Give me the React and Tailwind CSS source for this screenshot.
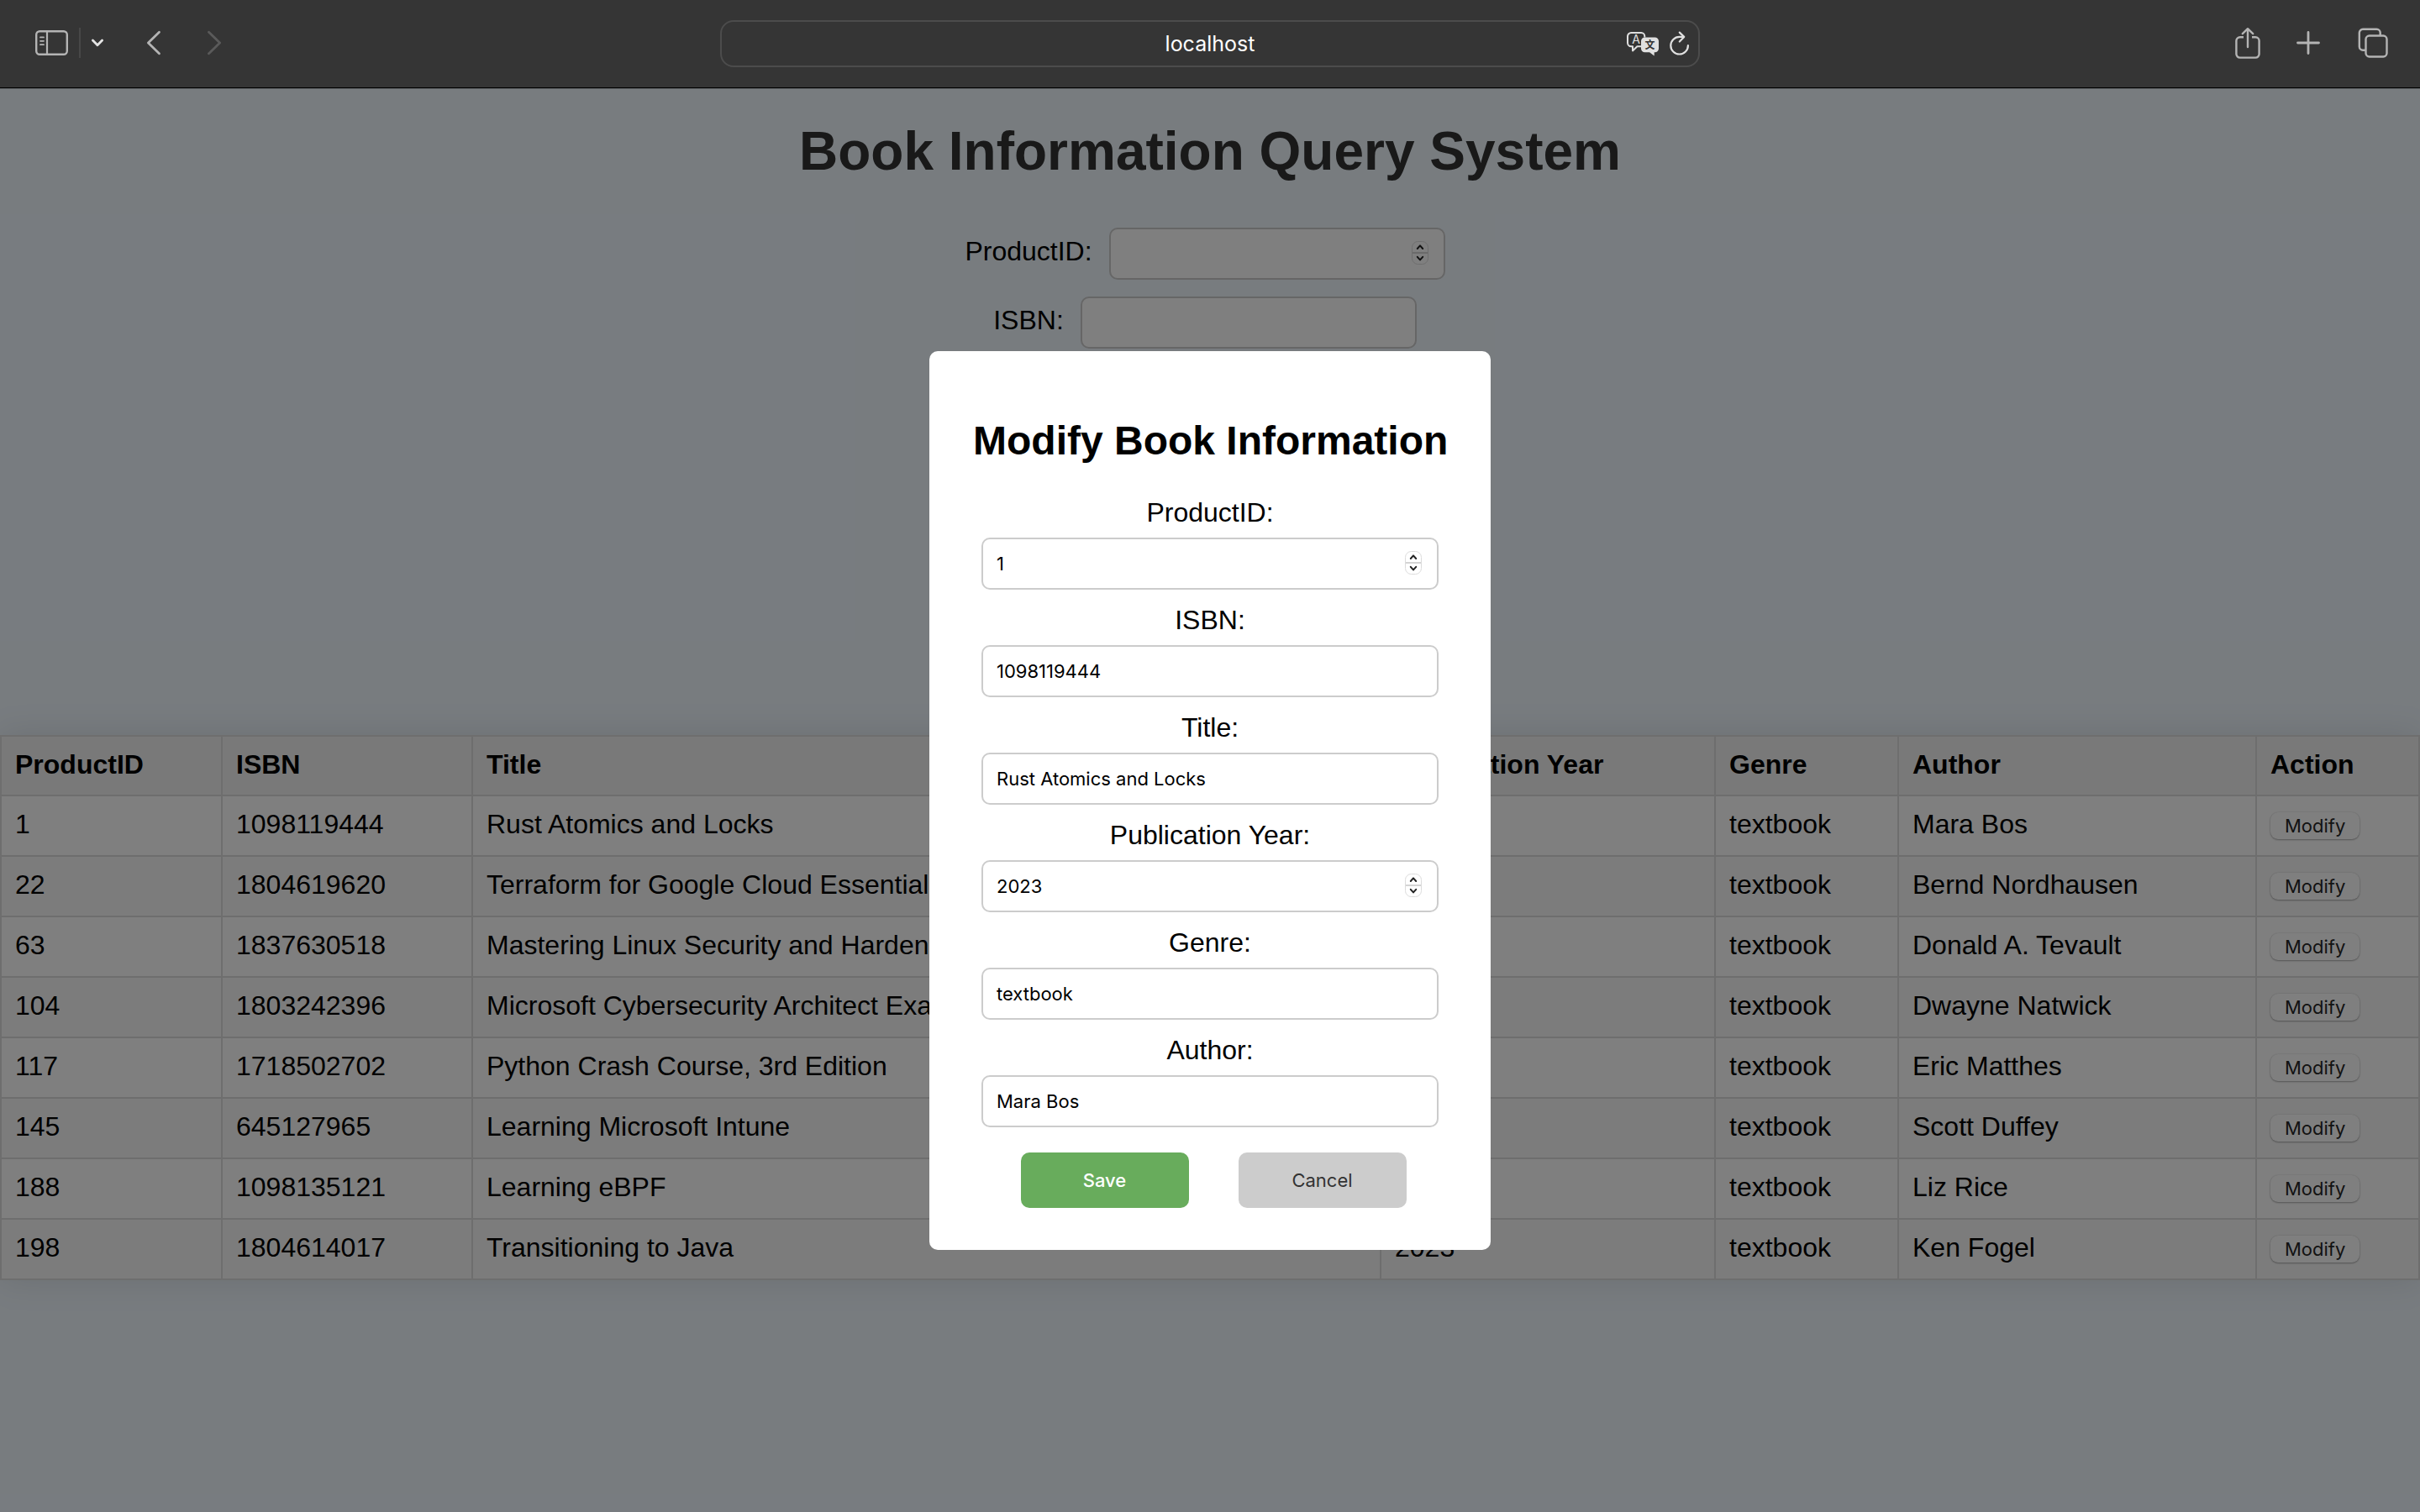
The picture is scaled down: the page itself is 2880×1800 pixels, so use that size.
import React from "react";

const books = [
  ["1", "1098119444", "Rust Atomics and Locks", "2023", "textbook", "Mara Bos"],
  ["22", "1804619620", "Terraform for Google Cloud Essentials", "2023", "textbook", "Bernd Nordhausen"],
  ["63", "1837630518", "Mastering Linux Security and Hardening", "2023", "textbook", "Donald A. Tevault"],
  ["104", "1803242396", "Microsoft Cybersecurity Architect Exam Ref", "2023", "textbook", "Dwayne Natwick"],
  ["117", "1718502702", "Python Crash Course, 3rd Edition", "2023", "textbook", "Eric Matthes"],
  ["145", "645127965", "Learning Microsoft Intune", "2023", "textbook", "Scott Duffey"],
  ["188", "1098135121", "Learning eBPF", "2023", "textbook", "Liz Rice"],
  ["198", "1804614017", "Transitioning to Java", "2023", "textbook", "Ken Fogel"],
];

const columns = [
  ["ProductID", "w-[263px]"],
  ["ISBN", "w-[298px]"],
  ["Title", ""],
  ["Publication Year", "w-[398px]"],
  ["Genre", "w-[218px]"],
  ["Author", "w-[426px]"],
  ["Action", "w-[194px]"],
];

const fields = [
  { id: "edit-product", label: "ProductID:", value: "1", number: true },
  { id: "edit-isbn", label: "ISBN:", value: "1098119444" },
  { id: "edit-title", label: "Title:", value: "Rust Atomics and Locks" },
  { id: "edit-year", label: "Publication Year:", value: "2023", number: true },
  { id: "edit-genre", label: "Genre:", value: "textbook" },
  { id: "edit-author", label: "Author:", value: "Mara Bos" },
];

function Stepper() {
  return (
    <svg
      aria-hidden="true"
      className="pointer-events-none absolute top-4 right-[18px] h-7 w-6"
      viewBox="0 0 24 28"
      fill="none"
    >
      <rect x="2.5" y="0.5" width="19" height="27" rx="7" fill="#fff" stroke="#dcdcdc" />
      <path d="M3 14h18" stroke="#d4d4d4" strokeWidth="2" />
      <path d="M8.800 9 12 5.400l3.200 3.600M8.800 18.800l3.200 3.600 3.200-3.600" stroke="#222" strokeWidth="2" strokeLinecap="round" strokeLinejoin="round" />
    </svg>
  );
}

function TextBox({ id, number, value, className }) {
  return (
    <div className={"relative " + className}>
      <input
        id={id}
        type={number ? "number" : "text"}
        defaultValue={value}
        className="block h-[62px] w-full appearance-none rounded-[10px] border-2 border-[#ccc] bg-white px-4 font-['Inter',sans-serif] text-[22px] text-black [appearance:textfield] [&::-webkit-inner-spin-button]:appearance-none"
      />
      {number && <Stepper />}
    </div>
  );
}

function Toolbar() {
  return (
    <header className="border-b border-[#5c5f61] bg-[#353535]">
      <div className="grid h-[105px] grid-cols-[1fr_40.5%_1fr] items-center border-b border-black text-[#b4b4b4]">
        <div className="flex items-center pb-0.5 pl-[41px]">
          <button type="button" aria-label="Show sidebar">
            <svg className="h-8 w-[41px]" viewBox="0 0 41 32" fill="none" stroke="currentColor">
              <rect x="2.2" y="2.2" width="36.6" height="27.6" rx="4" strokeWidth="2.4" />
              <path d="M15 2v28" strokeWidth="2.2" />
              <path d="M7 9.4h4M7 13.8h4M7 18.2h4" strokeWidth="1.8" strokeLinecap="round" />
            </svg>
          </button>
          <span className="ml-3 h-9 w-0.5 bg-[#484848]" />
          <button type="button" aria-label="Tab groups" className="ml-3">
            <svg className="h-4 w-4" viewBox="0 0 16 16" fill="none" stroke="#e4e4e4" strokeWidth="2.8" strokeLinecap="round" strokeLinejoin="round">
              <path d="m2.4 5 5.6 5.8L13.6 5" />
            </svg>
          </button>
          <button type="button" aria-label="Back" className="ml-[49px]">
            <svg className="h-8 w-5" viewBox="0 0 20 32" fill="none" stroke="currentColor" strokeWidth="2.8" strokeLinecap="round" strokeLinejoin="round">
              <path d="M16.5 3.2 3.4 16l13.1 12.8" />
            </svg>
          </button>
          <button type="button" aria-label="Forward" className="ml-[52px] text-[#5a5a5a]">
            <svg className="h-8 w-5" viewBox="0 0 20 32" fill="none" stroke="currentColor" strokeWidth="2.8" strokeLinecap="round" strokeLinejoin="round">
              <path d="M3.5 3.2 16.6 16 3.5 28.8" />
            </svg>
          </button>
        </div>

        <div className="relative">
          <input
            aria-label="Address"
            defaultValue="localhost"
            className="block h-14 w-full rounded-2xl border-2 border-[#4c4c4c] bg-transparent px-24 text-center font-['Inter',sans-serif] text-[25px] text-white"
          />
          <div className="absolute inset-y-0 right-3 flex items-center gap-3 text-[#e0e0e0]">
            <button type="button" aria-label="Translate">
              <svg className="h-8 w-10" viewBox="0 0 40 32" fill="none">
                <path d="M18 19.3h-4.6L8 24.4v-5.1H6.2A4.2 4.2 0 0 1 2 15.100V7.200A4.200 4.200 0 0 1 6.200 3h12A4.200 4.200 0 0 1 22.300 7.200V8.500" stroke="currentColor" strokeWidth="2" strokeLinejoin="round" />
                <text x="12.200" y="16" fontSize="14" textAnchor="middle" fill="currentColor" fontFamily="Inter, sans-serif">A</text>
                <path d="M22.500 8.500h12A4.500 4.500 0 0 1 39 13v8.800a4.500 4.500 0 0 1-4.500 4.500h-.8v4.200l-5.600-4.200h-5.600a4.500 4.500 0 0 1-4.500-4.500V13a4.500 4.500 0 0 1 4.500-4.500Z" fill="currentColor" />
                <text x="28.500" y="22" fontSize="12" fontWeight="700" textAnchor="middle" fill="#353535" fontFamily="'Noto Sans CJK SC', sans-serif">文</text>
              </svg>
            </button>
            <button type="button" aria-label="Reload">
              <svg className="h-8 w-6" viewBox="0 0 24 32" fill="none" stroke="currentColor" strokeWidth="2.200" strokeLinecap="round" strokeLinejoin="round">
                <path d="M21.900 18.200A10.300 10.300 0 1 1 11.600 7.900h5" />
                <path d="m11.800 2.600 5.400 5.300-5.400 5.600" />
              </svg>
            </button>
          </div>
        </div>

        <div className="flex items-center justify-end pr-[38px] pb-[3px]">
          <button type="button" aria-label="Share">
            <svg className="h-10 w-8" viewBox="0 0 32 40" fill="none" stroke="currentColor" strokeWidth="2.400" strokeLinecap="round" strokeLinejoin="round">
              <path d="M11 13.200H6.800a4.400 4.400 0 0 0-4.400 4.400v15.600a4.400 4.400 0 0 0 4.400 4.400h18.400a4.400 4.400 0 0 0 4.400-4.400V17.600a4.400 4.400 0 0 0-4.400-4.400H21" strokeLinecap="butt" />
              <path d="M16 25V3.200M9.800 9.200 16 3.200l6.200 6" />
            </svg>
          </button>
          <button type="button" aria-label="New tab" className="ml-10">
            <svg className="h-8 w-8" viewBox="0 0 32 32" fill="none" stroke="currentColor" strokeWidth="2.800" strokeLinecap="round">
              <path d="M16 3.500v25M3.500 16h25" />
            </svg>
          </button>
          <button type="button" aria-label="Show tabs" className="ml-[43px]">
            <svg className="h-9 w-9" viewBox="0 0 36 36" fill="none" stroke="currentColor" strokeWidth="2.400">
              <path d="M9.500 26.700H6A4.200 4.200 0 0 1 1.800 22.500V6A4.200 4.200 0 0 1 6 1.800h16.500A4.200 4.200 0 0 1 26.700 6v3.500" />
              <rect x="9.500" y="9.500" width="25" height="25" rx="4.200" />
            </svg>
          </button>
        </div>
      </div>
    </header>
  );
}

export default function App() {
  return (
    <div className="flex min-h-screen flex-col bg-[#f0f8ff] font-['Liberation_Sans',Arial,sans-serif] text-[32px] leading-9 text-black">
      <Toolbar />
      <main className="relative flex-1">
        <h1 className="pt-9 text-center text-[64px] leading-[76px] font-bold text-[#333]">
          Book Information Query System
        </h1>

        <form className="flex min-h-[657px] flex-col gap-5 pt-[53px]">
          {[
            ["query-product", "ProductID:", true],
            ["query-isbn", "ISBN:", false],
          ].map(([id, label, number]) => (
            <div key={id} className="flex items-center justify-center gap-5 pr-3">
              <label htmlFor={id} className="pb-[7px]">{label}</label>
              <TextBox id={id} number={number} className="w-[400px]" />
            </div>
          ))}
        </form>

        <table className="w-full table-fixed border-collapse bg-white text-left shadow-[0_0_40px_rgba(0,0,0,0.1)]">
          <thead>
            <tr className="h-[71px] bg-[#f2f2f2]">
              {columns.map(([name, width]) => (
                <th key={name} className={"border-2 border-[#ddd] px-4 pb-1 font-bold " + width}>{name}</th>
              ))}
            </tr>
          </thead>
          <tbody>
            {books.map((book) => (
              <tr key={book[0]} className="h-[72px] even:bg-[#f9f9f9]">
                {book.map((cell, i) => (
                  <td key={i} className="truncate border-2 border-[#ddd] px-4 pb-1">{cell}</td>
                ))}
                <td className="border-2 border-[#ddd] px-4">
                  <button type="button" className="block h-8 rounded-[9px] bg-white px-[17px] font-['Inter',sans-serif] text-[22px] leading-8 text-[#262626] shadow-[0_1px_2px_rgba(0,0,0,0.3),0_0_2px_rgba(0,0,0,0.15)]">
                    Modify
                  </button>
                </td>
              </tr>
            ))}
          </tbody>
        </table>

        <div className="absolute inset-0 flex items-center justify-center bg-black/50">
          <form role="dialog" aria-labelledby="dialog-title" className="w-[668px] rounded-[10px] bg-white px-[52px] pt-20 pb-[50px]">
            <h2 id="dialog-title" className="text-center text-[48px] leading-[54px] font-bold whitespace-nowrap">
              Modify Book Information
            </h2>
            <div className="flex flex-col gap-[18px] px-[10px] pt-10">
              {fields.map(({ id, label, value, number }) => (
                <div key={id} className="flex flex-col gap-3">
                  <label htmlFor={id} className="text-center">{label}</label>
                  <TextBox id={id} number={number} value={value} className="w-full" />
                </div>
              ))}
            </div>
            <div className="flex justify-center gap-[59px] pt-[30px] pl-2 font-['Inter',sans-serif] text-[22px]">
              <button type="button" className="h-[66px] w-[200px] rounded-[10px] bg-[#68ac5c] font-medium text-white">Save</button>
              <button type="button" className="h-[66px] w-[200px] rounded-[10px] bg-[#ccc] text-[#333]">Cancel</button>
            </div>
          </form>
        </div>
      </main>
    </div>
  );
}
